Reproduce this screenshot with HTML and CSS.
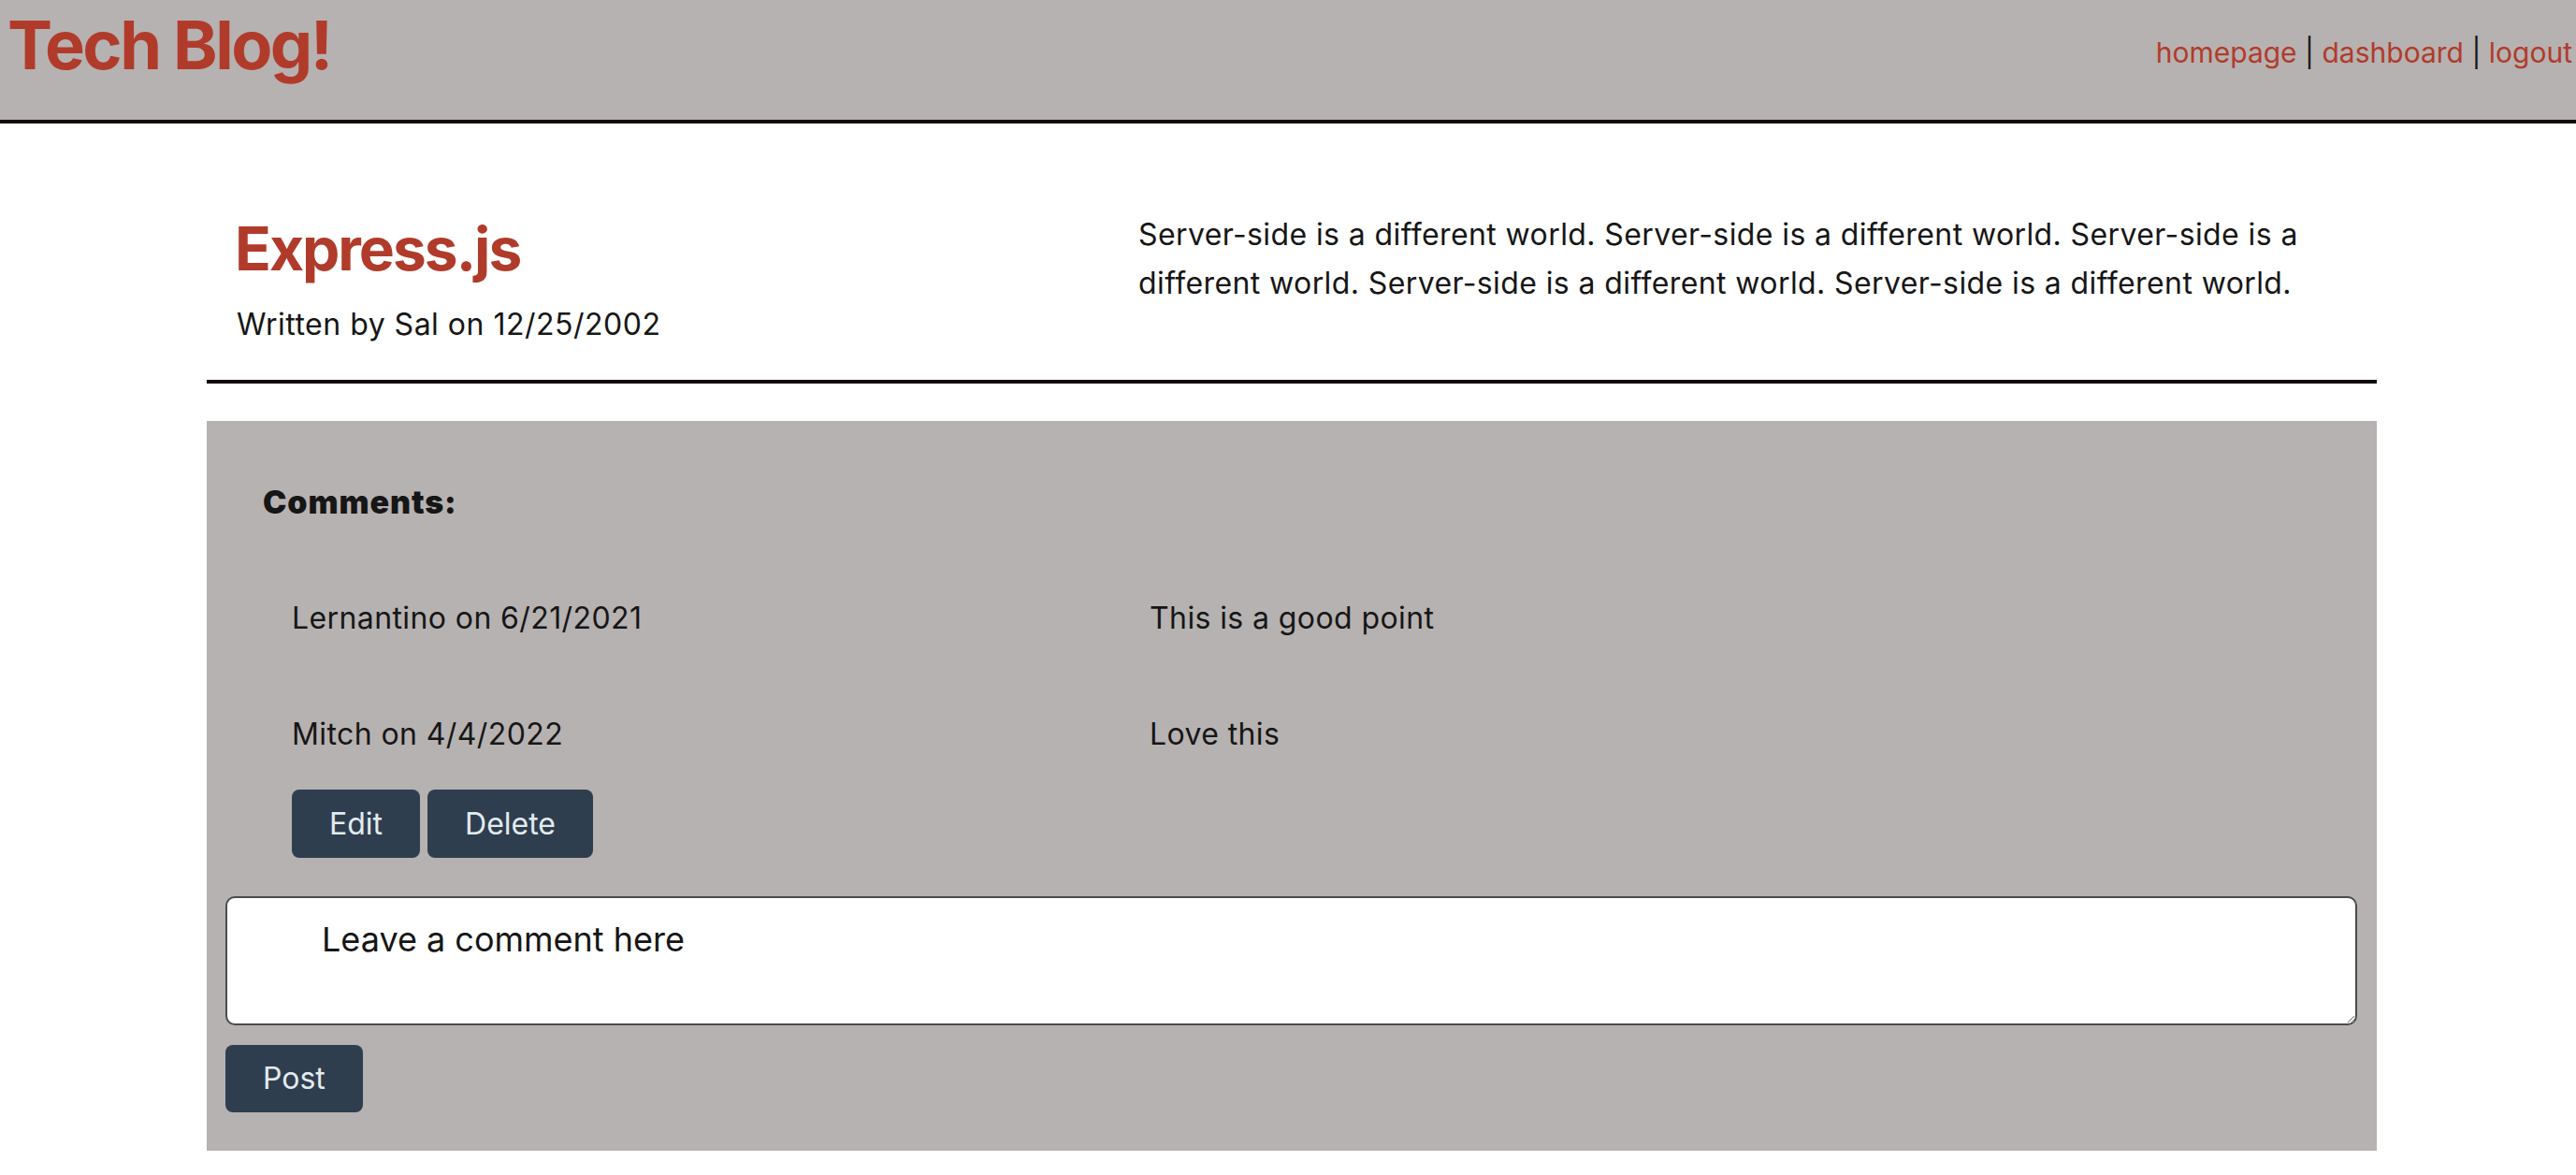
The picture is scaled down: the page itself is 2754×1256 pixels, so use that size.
FILE: index.html
```html
<!DOCTYPE html>
<html lang="en">
<head>
<meta charset="utf-8">
<title>Tech Blog!</title>
<link rel="stylesheet" href="styles.css">
</head>
<body>
<header class="site-header">
  <h1 class="brand">Tech Blog!</h1>
  <nav class="nav"><a href="#">homepage</a> | <a href="#">dashboard</a> | <a href="#">logout</a></nav>
</header>
<main class="container">
  <section class="post-head">
    <div class="post-meta">
      <h2 class="post-title">Express.js</h2>
      <p class="post-by">Written by Sal on 12/25/2002</p>
    </div>
    <p class="post-body">Server-side is a different world. Server-side is a different world. Server-side is a different world. Server-side is a different world. Server-side is a different world.</p>
  </section>
  <section class="comments-box">
    <h3 class="comments-title">Comments:</h3>
    <div class="comment">
      <p class="comment-by">Lernantino on 6/21/2021</p>
      <p class="comment-text">This is a good point</p>
    </div>
    <div class="comment">
      <p class="comment-by">Mitch on 4/4/2022</p>
      <p class="comment-text">Love this</p>
    </div>
    <div class="comment-actions">
      <button class="btn">Edit</button>
      <button class="btn">Delete</button>
    </div>
    <textarea class="comment-input" placeholder="Leave a comment here"></textarea>
    <button class="btn btn-post">Post</button>
  </section>
</main>
</body>
</html>
```
FILE: styles.css
```css
* { box-sizing: border-box; }
body {
  margin: 0;
  font-family: Inter, "Noto Sans", sans-serif;
  color: #161616;
  background: #ffffff;
}
p, h1, h2, h3 { margin: 0; }

.site-header {
  height: 132px;
  background: #b6b2b1;
  border-bottom: 4px solid #120c0b;
  display: flex;
  justify-content: space-between;
  align-items: flex-start;
  padding: 0 4px 0 8px;
}
.brand {
  margin-top: 12px;
  font-size: 72px;
  line-height: 72px;
  font-weight: 700;
  color: #b13b2b;
  letter-spacing: -2.5px;
}
.nav {
  margin-top: 32px;
  font-size: 30px;
  line-height: 48px;
  color: #161616;
}
.nav a { color: #b13b2b; text-decoration: none; }

.container {
  margin-left: 221px;
  width: 2320px;
}
.post-head {
  display: flex;
  align-items: flex-start;
  padding: 93px 32px 35px 30px;
  border-bottom: 4px solid #120c0b;
}
.post-meta {
  width: 966px;
  flex-shrink: 0;
  padding-top: 9px;
}
.post-title {
  font-size: 64px;
  line-height: 64px;
  font-weight: 700;
  color: #b13b2b;
  letter-spacing: -2px;
}
.post-by {
  margin-top: 25px;
  padding-left: 2px;
  font-size: 32px;
  line-height: 48px;
  letter-spacing: 0.5px;
}
.post-body {
  width: 1292px;
  font-size: 32px;
  line-height: 52px;
  letter-spacing: 0.4px;
}

.comments-box {
  margin-top: 40px;
  background: #b6b2b1;
  padding: 20px 21px 41px 20px;
}
.comments-title {
  margin: 43px 0 0 40px;
  font-size: 34px;
  line-height: 48px;
  font-weight: 900;
  letter-spacing: 0.9px;
  color: #161616;
}
.comment {
  display: grid;
  grid-template-columns: 917px 1fr;
  margin-top: 76px;
  padding-left: 71px;
  font-size: 32px;
  line-height: 48px;
  letter-spacing: 0.4px;
}
.comment-actions {
  margin-top: 35px;
  padding-left: 71px;
  display: flex;
  gap: 8px;
}
.btn {
  font-family: Inter, "Noto Sans", sans-serif;
  font-size: 32px;
  line-height: 49px;
  padding: 12px 40px;
  background: #2f3e4f;
  color: #e3ebee;
  border: none;
  border-radius: 8px;
}
.comment-input {
  display: block;
  margin-top: 41px;
  width: 2279px;
  height: 138px;
  border: 2px solid #4b4b4b;
  border-radius: 10px;
  background: #ffffff;
  padding: 22px 20px 0 101px;
  font-family: Inter, "Noto Sans", sans-serif;
  font-size: 36px;
  line-height: 44px;
  color: #161616;
}
.comment-input::placeholder { color: #161616; opacity: 1; }
.btn-post {
  display: block;
  margin-top: 21px;
  line-height: 48px;
}
```
